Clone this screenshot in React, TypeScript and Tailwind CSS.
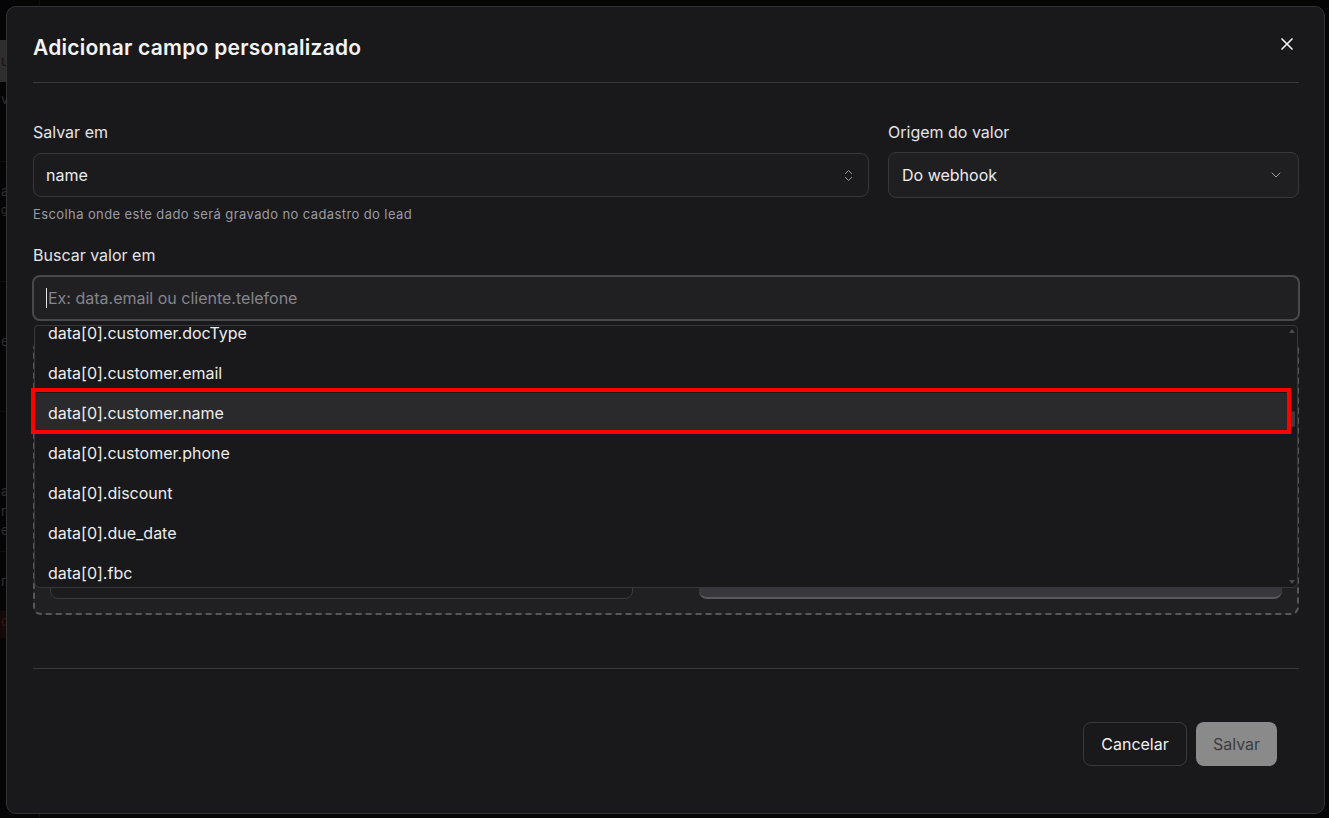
import React from "react";
import { X, ChevronsUpDown, ChevronDown } from "lucide-react";

const paths = [
  "data[0].customer.docType",
  "data[0].customer.email",
  "data[0].customer.name",
  "data[0].customer.phone",
  "data[0].discount",
  "data[0].due_date",
  "data[0].fbc",
];

function BackgroundPage() {
  return (
    <div className="flex h-[818px] w-full bg-[#0b0b0c]">
      <div className="flex w-[40px] flex-col border-r border-[#1f1f22] pt-[40px] text-[13px] text-[#5a5a5e]">
        <div className="h-[42px] bg-[#5c5c5c] pl-[1px] leading-[42px] text-[#222]">u</div>
        <div className="h-[80px] border-b border-[#1f1f22] pl-[1px] pt-[8px]">ve</div>
        <div className="h-[120px] border-b border-[#1f1f22] pl-[1px] pt-[20px]">
          <div>a</div>
          <div className="text-[11px]">gu</div>
        </div>
        <div className="h-[130px] border-b border-[#1f1f22] pl-[1px] pt-[50px]">e</div>
        <div className="h-[140px] border-b border-[#1f1f22] pl-[1px] pt-[70px]">
          <div>a</div>
          <div>r</div>
          <div>e</div>
        </div>
        <div className="h-[60px] border-b border-[#1f1f22] pl-[1px] pt-[20px]">r</div>
        <div className="h-[26px] bg-[#2a1010] pl-[1px] text-[#7a2a2a]">c</div>
      </div>
      <div className="flex-1" />
    </div>
  );
}

function Scrollbar() {
  return (
    <div className="flex w-[10px] flex-col items-center py-[3px]">
      <div className="h-0 w-0 border-x-[3px] border-b-[4px] border-x-transparent border-b-[#4a4a4e]" />
      <div className="flex w-full flex-1 flex-col items-center pt-[78px]">
        <div className="h-[16px] w-[5px] rounded-[2px] bg-[#3e3e42]" />
      </div>
      <div className="h-0 w-0 border-x-[3px] border-t-[4px] border-x-transparent border-t-[#4a4a4e]" />
    </div>
  );
}

function PathDropdown() {
  return (
    <div className="absolute left-[1px] right-[1px] top-[50px] z-10 flex h-[263px] overflow-hidden rounded-b-[6px] rounded-t-[4px] border border-[#38383c] bg-[#19191b]">
      <div className="flex-1 overflow-hidden">
        <div className="-mt-[13px] flex flex-col">
          {paths.map((p) => {
            const active = p === "data[0].customer.name";
            return (
              <div
                key={p}
                className={
                  active
                    ? "flex h-[40px] items-center bg-[#2a2a2d] pl-[13px] text-[16px] text-[#ececee]"
                    : "flex h-[40px] items-center pl-[13px] text-[16px] text-[#ececee]"
                }
              >
                {p}
              </div>
            );
          })}
        </div>
      </div>
      <Scrollbar />
    </div>
  );
}

export default function App() {
  return (
    <div
      className="relative h-[818px] w-[1329px] overflow-hidden"
      style={{ fontFamily: "Inter, 'Noto Sans', 'Liberation Sans', sans-serif" }}
    >
      <BackgroundPage />
      <div className="fixed inset-0 bg-black/50 pl-[6px] pt-[6px]">
        <div className="flex h-[808px] w-[1319px] flex-col rounded-[10px] border border-[#333336] bg-[#19191b] pl-[26px] pr-[25px] text-[#ececee]">
          {/* header */}
          <div className="flex items-start justify-between border-b border-[#3a3a3d] pb-[20px] pt-[27px]">
            <h2 className="text-[21px] font-semibold leading-[28px] tracking-[0.25px] text-[#f4f4f5]">
              Adicionar campo personalizado
            </h2>
            <button className="mr-[2px] text-[#f0f0f0]">
              <X size={20} strokeWidth={2} />
            </button>
          </div>

          {/* body */}
          <div className="flex flex-col pt-[37px]">
            <div className="grid grid-cols-[836px_1fr] gap-[19px]">
              <div className="flex flex-col">
                <label className="text-[16px] leading-[24px] text-[#e4e4e7]">Salvar em</label>
                <div className="mt-[9px] flex h-[44px] items-center justify-between rounded-[8px] border border-[#38383c] bg-[#1b1b1e] pl-[12px] pr-[12px]">
                  <span className="text-[16px] text-[#ececee]">name</span>
                  <ChevronsUpDown size={15} strokeWidth={1.5} className="text-[#a1a1aa]" />
                </div>
                <p className="mt-[7px] text-[13px] leading-[20px] tracking-[0.4px] text-[#9b9ba2]">
                  Escolha onde este dado será gravado no cadastro do lead
                </p>
              </div>
              <div className="flex flex-col">
                <label className="text-[16px] leading-[24px] text-[#e4e4e7]">Origem do valor</label>
                <div className="mt-[8px] flex h-[46px] items-center justify-between rounded-[8px] border border-[#38383c] bg-[#1f1f22] pl-[13px] pr-[14px]">
                  <span className="text-[16px] text-[#ececee]">Do webhook</span>
                  <ChevronDown size={16} strokeWidth={1.5} className="text-[#a1a1aa]" />
                </div>
              </div>
            </div>

            <label className="mt-[19px] text-[16px] leading-[24px] text-[#e4e4e7]">Buscar valor em</label>
            <div className="relative mt-[8px]">
              <div className="-mx-[1px] flex h-[46px] items-center rounded-[8px] border-2 border-[#48484d] bg-[#202023] pl-[12px]">
                <span className="mr-[1px] h-[20px] w-[1px] bg-[#e4e4e7]" />
                <span className="text-[16px] text-[#85858c]">Ex: data.email ou cliente.telefone</span>
              </div>
              <PathDropdown />
              {/* highlight frame around the selected suggestion */}
              <span className="pointer-events-none absolute left-[-2px] right-[8px] top-[113px] z-20 h-[46px] border-[4px] border-[#ff0000]" />
            </div>

            {/* transformation block */}
            <div className="mt-[20px] flex h-[274px] flex-col justify-end rounded-[8px] border-2 border-dashed border-[#58585c] bg-[#202023] px-[15px] pb-[14px]">
              <div className="grid grid-cols-2 gap-[66px]">
                <div className="h-[40px] rounded-[8px] border border-[#3a3a3e] bg-[#1c1c1f]" />
                <div className="h-[40px] rounded-[8px] border-b-2 border-[#5a5a5e] bg-[#38383c]" />
              </div>
            </div>

            <div className="mt-[53px] h-px bg-[#3a3a3d]" />

            {/* footer */}
            <div className="flex justify-end gap-[9px] pr-[22px] pt-[53px]">
              <button className="h-[44px] w-[104px] rounded-[8px] border border-[#3a3a3d] text-[16px] text-[#f0f0f2]">
                Cancelar
              </button>
              <button className="h-[44px] w-[81px] rounded-[8px] bg-[#8a8a8a] text-[16px] text-[#3c3c3e]">
                Salvar
              </button>
            </div>
          </div>
        </div>
      </div>
    </div>
  );
}
